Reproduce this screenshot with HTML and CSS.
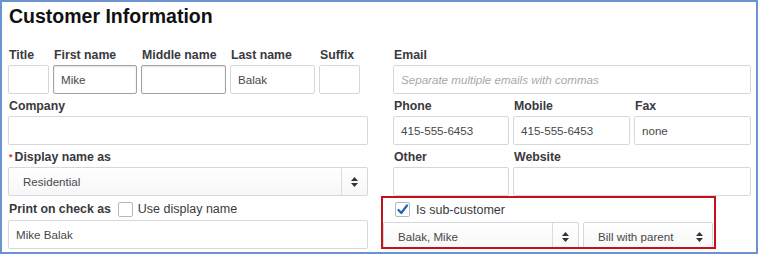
FILE: index.html
```html
<!DOCTYPE html>
<html lang="en">

<head>
    <meta charset="UTF-8">
    <title>Customer Information</title>
    <link rel="stylesheet" href="styles.css">
</head>

<body>
    <div class="frame">
        <h1 class="title">Customer Information</h1>

        <div class="columns">
            <!-- left column -->
            <div class="col">
                <div class="row">
                    <div class="field w-title">
                        <div class="label">Title</div>
                        <div class="input"></div>
                    </div>
                    <div class="field w-first">
                        <div class="label">First name</div>
                        <div class="input dark">Mike</div>
                    </div>
                    <div class="field w-middle">
                        <div class="label">Middle name</div>
                        <div class="input dark"></div>
                    </div>
                    <div class="field w-last">
                        <div class="label">Last name</div>
                        <div class="input">Balak</div>
                    </div>
                    <div class="field w-suffix">
                        <div class="label">Suffix</div>
                        <div class="input"></div>
                    </div>
                </div>

                <div class="field">
                    <div class="label">Company</div>
                    <div class="input"></div>
                </div>

                <div class="field">
                    <div class="label"><span class="req">*</span>Display name as</div>
                    <div class="select">
                        <span class="select-text">Residential</span>
                        <span class="arrow-cell divided">
                            <svg width="7" height="10" viewBox="0 0 7 10"><path d="M0 4L3.5 0L7 4Z M0 6L3.5 10L7 6Z" fill="#333"/></svg>
                        </span>
                    </div>
                </div>

                <div class="field">
                    <div class="label check-row">
                        <span>Print on check as</span>
                        <span class="check print-check"></span>
                        <span class="plain">Use display name</span>
                    </div>
                    <div class="input">Mike Balak</div>
                </div>
            </div>

            <!-- right column -->
            <div class="col">
                <div class="field">
                    <div class="label">Email</div>
                    <div class="input placeholder">Separate multiple emails with commas</div>
                </div>

                <div class="row">
                    <div class="field w-phone">
                        <div class="label">Phone</div>
                        <div class="input">415-555-6453</div>
                    </div>
                    <div class="field w-mobile">
                        <div class="label">Mobile</div>
                        <div class="input">415-555-6453</div>
                    </div>
                    <div class="field w-fax">
                        <div class="label">Fax</div>
                        <div class="input">none</div>
                    </div>
                </div>

                <div class="row">
                    <div class="field w-phone">
                        <div class="label">Other</div>
                        <div class="input"></div>
                    </div>
                    <div class="field w-website">
                        <div class="label">Website</div>
                        <div class="input"></div>
                    </div>
                </div>

                <div class="sub">
                    <div class="sub-check">
                        <span class="check checked">
                            <svg width="13" height="13" viewBox="0 0 13 13"><path d="M2.5 7L5.3 10L11 2.5" fill="none" stroke="#2b5cb8" stroke-width="2.2" stroke-linecap="round" stroke-linejoin="round"/></svg>
                        </span>
                        <span class="plain">Is sub-customer</span>
                    </div>
                    <div class="sub-selects">
                        <div class="select w-parent">
                            <span class="select-text">Balak, Mike</span>
                            <span class="arrow-cell divided">
                                <svg width="7" height="10" viewBox="0 0 7 10"><path d="M0 4L3.5 0L7 4Z M0 6L3.5 10L7 6Z" fill="#333"/></svg>
                            </span>
                        </div>
                        <div class="select w-bill">
                            <span class="select-text">Bill with parent</span>
                            <span class="arrow-cell">
                                <svg width="7" height="10" viewBox="0 0 7 10"><path d="M0 4L3.5 0L7 4Z M0 6L3.5 10L7 6Z" fill="#333"/></svg>
                            </span>
                        </div>
                    </div>
                </div>
            </div>
        </div>
    </div>
</body>

</html>
```

FILE: styles.css
```css
body {
    margin: 0;
    font-family: "Liberation Sans", Arial, sans-serif;
    background: #fff;
}

.frame {
    width: 758px;
    height: 254px;
    box-sizing: border-box;
    border: 2px solid #6b93cf;
    padding: 2px 6px 0 6px;
    overflow: hidden;
}

.title {
    margin: 0;
    padding-left: 1px;
    font-size: 19.5px;
    line-height: 24px;
    font-weight: bold;
    color: #111;
}

.columns {
    display: grid;
    grid-template-columns: 360px 358px;
    column-gap: 25px;
    margin-top: 19px;
}

.col {
    display: flex;
    flex-direction: column;
    gap: 4px;
}

.row {
    display: flex;
    gap: 4px;
}

.label {
    height: 16px;
    line-height: 16px;
    margin-bottom: 2px;
    padding-left: 1px;
    font-size: 12.3px;
    font-weight: bold;
    color: #393a3d;
    white-space: nowrap;
}

.req {
    color: #d52b1e;
    font-size: 9px;
    vertical-align: top;
    margin-right: 2px;
}

.input {
    height: 29px;
    box-sizing: border-box;
    border: 1px solid #d4d7dc;
    border-radius: 2px;
    padding: 0 7px;
    font-size: 11.6px;
    line-height: 27px;
    color: #484848;
    background: #fff;
    white-space: nowrap;
    overflow: hidden;
}

.input.dark {
    border-color: #a3a3a3;
    box-shadow: inset 0 1px 2px rgba(0, 0, 0, 0.12);
}

.placeholder {
    font-style: italic;
    color: #a8a8a8;
}

/* field widths */
.w-title { width: 41px; }
.w-first { width: 84px; }
.w-middle { width: 85px; }
.w-last { width: 85px; }
.w-suffix { width: 41px; }
.w-phone { width: 116px; }
.w-mobile { width: 117px; }
.w-fax { width: 117px; }
.w-website { width: 238px; }
.w-parent { width: 196px; }
.w-bill { width: 130px; }

.select {
    display: flex;
    height: 29px;
    box-sizing: border-box;
    border: 1px solid #d4d7dc;
    border-radius: 2px;
    background: linear-gradient(#fff, #f7f7f7);
    font-size: 11.6px;
    color: #484848;
}

.select-text {
    flex: 1;
    padding-left: 14px;
    line-height: 27px;
    white-space: nowrap;
}

.arrow-cell {
    width: 25px;
    display: flex;
    align-items: center;
    justify-content: center;
}

.arrow-cell.divided {
    border-left: 1px solid #dcdcdc;
}

.check-row {
    height: 18px;
    line-height: 18px;
    display: flex;
    align-items: center;
}

.check {
    width: 15px;
    height: 15px;
    box-sizing: border-box;
    border: 1px solid #b8b8b8;
    border-radius: 2px;
    background: #fff;
    display: inline-flex;
    align-items: center;
    justify-content: center;
}

.print-check {
    margin: 0 5px 0 7px;
}

.plain {
    font-weight: normal;
    font-size: 12.5px;
    color: #393a3d;
}

.sub {
    margin: -4px 0 0 -12px;
    width: 335px;
    height: 53px;
    box-sizing: border-box;
    border: 2px solid #c4121c;
    padding: 4px 0 0 0;
    overflow: hidden;
}

.sub-check {
    display: flex;
    align-items: center;
    gap: 6px;
    height: 15px;
    padding-left: 12px;
}

.sub-selects {
    display: flex;
    gap: 4px;
    margin-top: 5px;
}
```
